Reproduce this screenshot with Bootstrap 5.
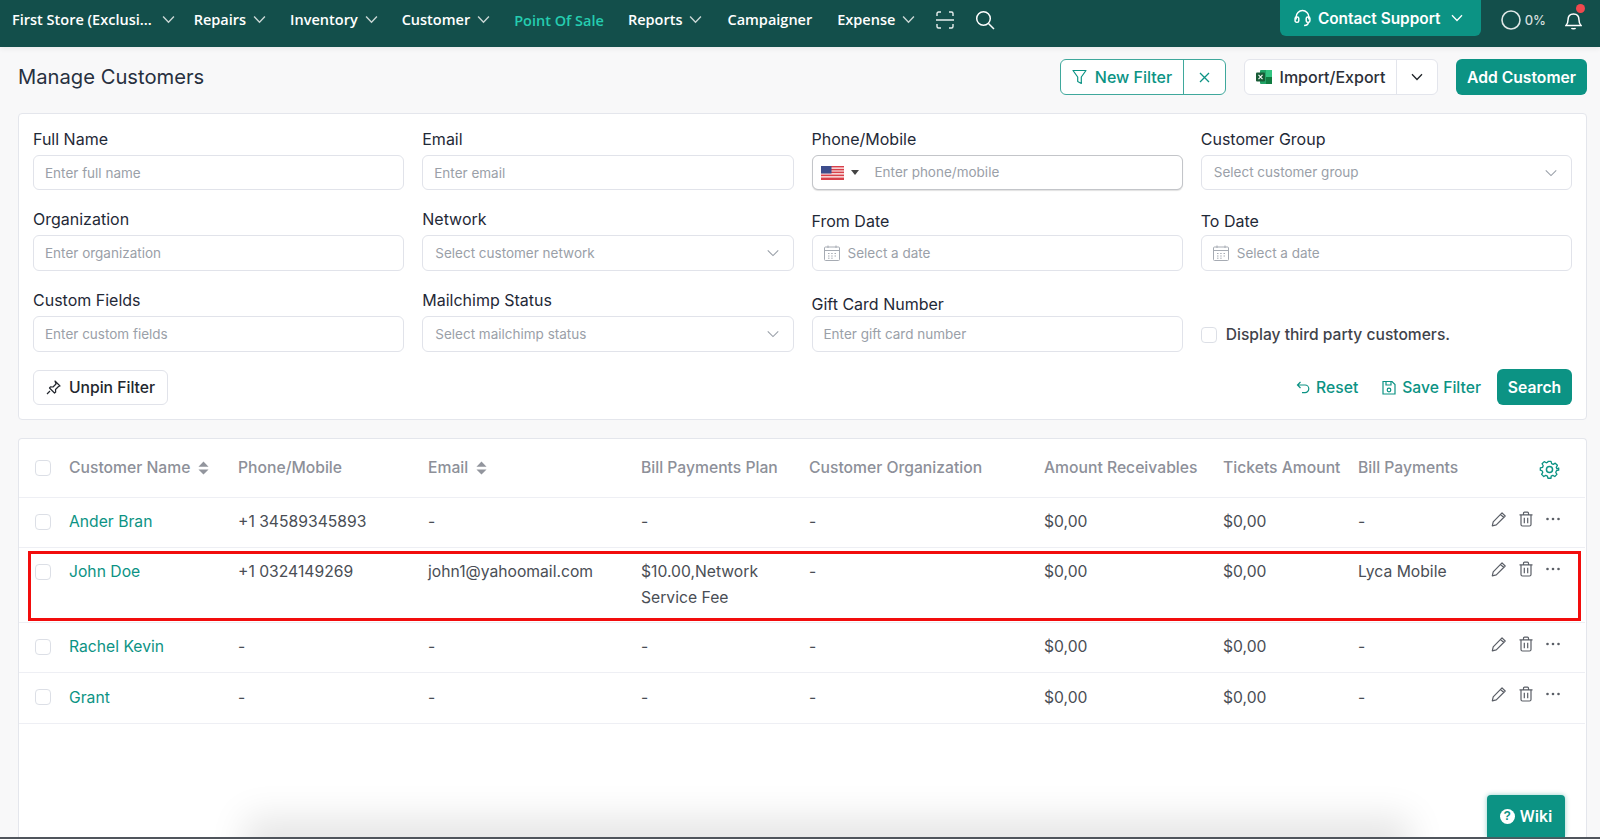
<!DOCTYPE html>
<html lang="en">
<head>
    <meta charset="UTF-8">
    <meta name="viewport" content="width=device-width, initial-scale=1.0">
    <title>Manage Customers</title>
    <link href="https://cdn.jsdelivr.net/npm/bootstrap@5.3.0/dist/css/bootstrap.min.css" rel="stylesheet">
    <style>
        html, body { height: 100%; }
        body {
            font-family: Inter, "Liberation Sans", sans-serif;
            background: #f8f8f9;
            color: #3f434a;
            overflow: hidden;
        }
        svg { flex: none; }
        .page-wrap { height: 839px; display: flex; flex-direction: column; position: relative; }
        .topbar {
            height: 47px;
            background: #134f4b;
            color: #fff;
            padding-left: 12px;
            padding-right: 18px;
            padding-bottom: 8px;
            font: 600 14.5px "Open Sans", sans-serif;
            box-shadow: 0 2px 5px rgba(0,0,0,.06);
        }
        .top-item { display: flex; align-items: center; gap: 7px; margin-right: 24px; white-space: nowrap; color: #fff; }
        .top-item.active-item { color: #25cdb0; padding-top: 2px; }
        .top-item svg { color: #c9d6d4; }
        .store-item { margin-right: 19px; gap: 10px; }
        .wide-item { margin-right: 25px; }
        .expense-item { margin-right: 21px; }
        .scan-icon { margin-right: 21px; }
        .support-btn {
            background: #0c9384;
            color: #fff;
            height: 36px;
            width: 201px;
            align-self: flex-start;
            border-radius: 0 0 6px 6px;
            font: 600 15.4px Inter, sans-serif;
            gap: 7px;
            padding-right: 3px;
            margin-right: 20px;
        }
        .progress-txt { font-size: 13px; font-family: Inter, sans-serif; font-weight: 500; color: #d5dfde; }
        .bell-wrap { position: relative; margin-left: 19px; margin-top: 2px; }
        .bell-dot { position: absolute; width: 9px; height: 9px; background: #f0484e; border-radius: 50%; top: -7px; right: -3px; }
        .head-row { padding: 12px 13px 18px 18px; }
        .page-title { font-size: 20.2px; font-weight: 400; color: #27303f; margin: 0; }
        .filter-group { border: 1px solid #3fa89c; border-radius: 6px; background: #fff; color: #0c9384; width: 166px; height: 36px; margin-right: 18px; }
        .filter-main { width: 123px; gap: 8px; border-right: 1px solid #3fa89c; height: 100%; font-size: 16px; font-weight: 500; }
        .filter-x { flex: 1; height: 100%; }
        .import-group { border: 1px solid #e3e5ec; border-radius: 6px; background: #fff; color: #2c3038; width: 194px; height: 36px; margin-right: 18px; }
        .import-main { width: 152px; gap: 8px; border-right: 1px solid #e3e5ec; height: 100%; font-size: 16px; font-weight: 500; }
        .import-arrow { flex: 1; height: 100%; }
        .teal-btn { background: #0c9384; border: 0; color: #fff; font-weight: 600; height: 36px; border-radius: 6px; font-size: 15.7px; padding: 1px 0 0; }
        .teal-btn:hover { background: #0c9384; color: #fff; }
        .add-btn { width: 131px; }
        .search-btn { width: 75px; }
        .panel { border: 1px solid #e4e6ec; border-radius: 4px; background: #fff; margin-left: 18px; margin-right: 13px; }
        .filter-panel { padding: 13px 14px 14px; height: 307px; margin-bottom: 18px; }
        .filter-row { --bs-gutter-x: 18px; margin-bottom: 17px; align-items: flex-end; }
        .filter-label { display: block; font-size: 16px; font-weight: 400; line-height: 24px; margin-bottom: 4px; color: #1f2937; }
        .label-date { line-height: 20px; margin-bottom: 4px; }
        .label-gift { line-height: 20px; margin-bottom: 2px; }
        .filter-input {
            height: 36px;
            border: 1px solid #e1e3ea;
            border-radius: 6px;
            font-size: 13.5px;
            padding: 0 11px;
            color: #9aa0a8;
            box-shadow: none;
        }
        .filter-input::placeholder, .bare-input::placeholder { color: #9aa0a8; }
        .row-one .filter-input { height: 35px; }
        .form-select.filter-input {
            padding-left: 12px;
            background-image: url("data:image/svg+xml,%3csvg xmlns='http://www.w3.org/2000/svg' viewBox='0 0 16 16'%3e%3cpath fill='none' stroke='%23999fa8' stroke-width='1.2' d='M2 5l6 6 6-6'/%3e%3c/svg%3e");
            background-size: 14px 14px;
            background-position: right 13px center;
        }
        .bare-input { border: 0; outline: 0; font-size: 13.5px; padding: 0; width: 100%; color: #9aa0a8; background: transparent; }
        .phone-box { border-color: #c3c5c9; box-shadow: 0 1px 1px rgba(0,0,0,.12); gap: 0; padding-left: 8px; }
        .caret-mini { width: 0; height: 0; border-left: 4px solid transparent; border-right: 4px solid transparent; border-top: 5px solid #444; margin: 0 12px 0 7px; }
        .box-check { width: 16px; height: 16px; margin: 0; border: 1px solid #dcdfe6; border-radius: 3px; flex: none; }
        .third-party { height: 36px; gap: 9px; font-size: 15.6px; font-weight: 500; color: #3f434a; padding-top: 1px; }
        .unpin-btn { width: 135px; height: 35px; background: #fff; border: 1px solid #e1e3ea; border-radius: 6px; font-size: 15.7px; font-weight: 500; color: #23272e; gap: 8px; padding: 1px 0 0; }
        .link-btn { color: #0c9384; font-size: 15.7px; font-weight: 500; gap: 6px; display: flex; align-items: center; padding-top: 1px; }
        .table-panel { flex: 1; min-height: 0; margin-bottom: 0; border-bottom: 0; border-radius: 4px 4px 0 0; position: relative; overflow: hidden; }
        .cust-table { table-layout: fixed; width: 1566px; margin: 0; font-size: 15.7px; --bs-table-color: #4a4e55; }
        .cust-table th, .cust-table td { padding: 0 10px 0 0; border-bottom: 1px solid #eeeff4; }
        .cust-table th { height: 58px; font-weight: 500; color: #8d9099; vertical-align: middle; white-space: nowrap; padding-top: 1px; }
        .cust-table td { vertical-align: top; line-height: 26px; padding-top: 11px; }
        .cust-table .row-a td { height: 50px; }
        .cust-table .row-b td { height: 75px; }
        .cust-table .row-c td { height: 51px; padding-top: 12px; }
        .cust-table td.check-cell, .cust-table th.check-cell { padding-left: 16px; padding-right: 0; }
        .cust-table td.check-cell { padding-top: 16px; line-height: 1; }
        .cust-table th.check-cell .box-check, .cust-table td.check-cell .box-check { display: block; }
        .cust-name { color: #0c9384; text-decoration: none; }
        .act-cell { box-shadow: -5px 0 6px -4px rgba(0,0,0,.10); padding-left: 29px !important; padding-right: 0 !important; padding-top: 13px !important; }
        .act-icons { display: flex; align-items: center; gap: 11px; color: #5a5e66; }
        .sort-arrows { display: inline-block; vertical-align: -2px; margin-left: 8px; }
        .gear-icon { display: block; margin-left: 29px; margin-top: 3px; }
        .red-box { position: absolute; left: 9px; top: 112px; width: 1553px; height: 70px; border: 3px solid #f20d0d; pointer-events: none; }
        .bottom-haze { position: absolute; left: 250px; right: 200px; bottom: -14px; height: 10px; box-shadow: 0 0 36px 24px rgba(0,0,0,.10); }
        .wiki-btn {
            position: absolute;
            left: 1487px;
            bottom: 2px;
            width: 78px;
            height: 42px;
            background: #0c9384;
            color: #fff;
            border-radius: 4px 4px 0 0;
            font: 500 17px Roboto, sans-serif;
            gap: 5px;
            box-shadow: 0 0 5px rgba(12,147,132,.45);
        }
        .wiki-q { width: 15px; height: 15px; border-radius: 50%; background: #fff; color: #0c9384; font: 700 12px/15px "Liberation Sans", sans-serif; text-align: center; }
        .bottom-line { height: 2px; background: #50555c; flex: none; }
    </style>
</head>
<body>
    <svg width="0" height="0" class="position-absolute">
        <symbol id="chev" viewBox="0 0 12 8"><path d="M1 1.2l5 5.3 5-5.3" fill="none" stroke="currentColor" stroke-width="1.3"/></symbol>
        <symbol id="cal" viewBox="0 0 16 16"><g fill="none" stroke="#a6abb3"><rect x=".5" y="2" width="15" height="13.5" rx="1"/><path d="M.5 5.5h15M4 .5V3M12 .5V3"/><path d="M4 8.5h1.5M7.2 8.5h1.5M10.5 8.5H12M4 11h1.5M7.2 11h1.5M10.5 11H12M4 13.2h1.5M7.2 13.2h1.5"/></g></symbol>
        <symbol id="pencil" viewBox="0 0 16 16"><path d="M11 1.8l3.2 3.2-8.9 8.9-4 .9.9-4zM9.5 3.3l3.2 3.2" fill="none" stroke="currentColor" stroke-width="1.2" stroke-linejoin="round"/></symbol>
        <symbol id="trash" viewBox="0 0 16 16"><path d="M1.5 3.8h13M5.5 3.8V2.2c0-.7.4-1.1 1-1.1h3c.6 0 1 .4 1 1.1v1.6M3 3.8v9.7c0 1 .6 1.5 1.5 1.5h7c.9 0 1.5-.5 1.5-1.5V3.8M6.3 6.8v5.4M9.7 6.8v5.4" fill="none" stroke="currentColor" stroke-width="1.2"/></symbol>
        <symbol id="dots" viewBox="0 0 16 16"><circle cx="2.5" cy="8" r="1.3" fill="currentColor"/><circle cx="8" cy="8" r="1.3" fill="currentColor"/><circle cx="13.5" cy="8" r="1.3" fill="currentColor"/></symbol>
        <symbol id="sort" viewBox="0 0 12 14"><path d="M6 0l5.500 5.500H.5zM6 14L.5 8.500h11z" fill="#92959d"/></symbol>
    </svg>

    <div class="page-wrap">
        <nav class="topbar d-flex align-items-center">
            <div class="top-item store-item">First Store (Exclusi... <svg width="13" height="9"><use href="#chev"/></svg></div>
            <div class="top-item">Repairs <svg width="13" height="9"><use href="#chev"/></svg></div>
            <div class="top-item">Inventory <svg width="13" height="9"><use href="#chev"/></svg></div>
            <div class="top-item">Customer <svg width="13" height="9"><use href="#chev"/></svg></div>
            <div class="top-item active-item">Point Of Sale</div>
            <div class="top-item wide-item">Reports <svg width="13" height="9"><use href="#chev"/></svg></div>
            <div class="top-item wide-item">Campaigner</div>
            <div class="top-item expense-item">Expense <svg width="13" height="9"><use href="#chev"/></svg></div>
            <svg width="18" height="18" viewBox="0 0 18 18" fill="none" stroke="#e8efee" stroke-width="1.4" class="scan-icon"><path d="M1 5V2.500C1 1.700 1.700 1 2.500 1H5M13 1h2.500c.8 0 1.500.7 1.500 1.500V5M1 13v2.500c0 .8.7 1.500 1.500 1.500H5M13 17h2.500c.8 0 1.500-.7 1.500-1.500V13M0 9h18"/></svg>
            <svg width="20" height="20" viewBox="0 0 20 20" fill="none" stroke="#fff" stroke-width="1.500"><circle cx="8.500" cy="8.500" r="6.800"/><path d="M13.500 13.500L19 19"/></svg>

            <div class="support-btn d-flex align-items-center justify-content-center ms-auto">
                <svg width="17" height="18" viewBox="0 0 16 17" fill="none" stroke="#fff" stroke-width="1.400"><path d="M2 10V7.500a6 6 0 0 1 12 0V10"/><rect x="1" y="7.500" width="3.500" height="5" rx="1.500"/><rect x="11.500" y="7.500" width="3.500" height="5" rx="1.500"/><path d="M13.500 12.500c0 2-1.500 3-4 3"/></svg>
                Contact Support
                <svg width="12" height="8" class="ms-1"><use href="#chev"/></svg>
            </div>
            <svg width="20" height="20" viewBox="0 0 20 20" fill="none" stroke="#dfe7e6" stroke-width="1.600"><circle cx="10" cy="10" r="9"/></svg>
            <span class="progress-txt ms-1">0%</span>
            <div class="bell-wrap">
                <svg width="17" height="19" viewBox="0 0 17 19" fill="none" stroke="#fff" stroke-width="1.500" class="d-block"><path d="M1 14.500c1.500-1.500 2-2.500 2-5.500 0-3.500 2-6 5.500-6s5.500 2.500 5.500 6c0 3 .5 4 2 5.500zM6.500 17c.5 1 3.500 1 4 0"/></svg>
                <span class="bell-dot"></span>
            </div>
        </nav>

        <div class="head-row d-flex align-items-center">
            <h1 class="page-title me-auto">Manage Customers</h1>
            <div class="filter-group d-flex align-items-center">
                <div class="filter-main d-flex align-items-center justify-content-center">
                    <svg width="15" height="16" viewBox="0 0 15 16" fill="none" stroke="#0c9384" stroke-width="1.200" stroke-linejoin="round"><path d="M1 1.500h13L9.300 8v6.500l-3.600-2V8z"/></svg>
                    New Filter
                </div>
                <div class="filter-x d-flex align-items-center justify-content-center">
                    <svg width="11" height="11" viewBox="0 0 11 11" stroke="#0c9384" stroke-width="1.300"><path d="M1 1l9 9M10 1l-9 9"/></svg>
                </div>
            </div>
            <div class="import-group d-flex align-items-center">
                <div class="import-main d-flex align-items-center justify-content-center">
                    <svg width="16" height="16" viewBox="0 0 16 16"><rect x="4" y="1" width="12" height="14" rx="1" fill="#21a366"/><rect x="10" y="1" width="6" height="7" fill="#33c481"/><rect x="10" y="8" width="6" height="7" fill="#107c41"/><rect x="0" y="3.500" width="9" height="9" rx="1" fill="#185c37"/><path d="M2.500 5.800l4 4.400M6.500 5.800l-4 4.400" stroke="#fff" stroke-width="1.100"/></svg>
                    Import/Export
                </div>
                <div class="import-arrow d-flex align-items-center justify-content-center">
                    <svg width="12" height="8" class="text-dark"><use href="#chev"/></svg>
                </div>
            </div>
            <button class="btn teal-btn add-btn">Add Customer</button>
        </div>

        <div class="panel filter-panel">
            <div class="row filter-row row-one">
                <div class="col-3">
                    <label class="filter-label">Full Name</label>
                    <input class="form-control filter-input" placeholder="Enter full name">
                </div>
                <div class="col-3">
                    <label class="filter-label">Email</label>
                    <input class="form-control filter-input" placeholder="Enter email">
                </div>
                <div class="col-3">
                    <label class="filter-label">Phone/Mobile</label>
                    <div class="form-control filter-input phone-box d-flex align-items-center">
                        <svg width="23" height="14" viewBox="0 0 23 14"><rect width="23" height="14" fill="#d8404a"/><path d="M0 2.200h23M0 5h23M0 7.800h23M0 10.800h23" stroke="#fff" stroke-width="1.200"/><rect width="10.500" height="7.500" fill="#3d4d8c"/></svg>
                        <span class="caret-mini"></span>
                        <input class="bare-input ms-1" placeholder="Enter phone/mobile">
                    </div>
                </div>
                <div class="col-3">
                    <label class="filter-label">Customer Group</label>
                    <select class="form-select filter-input"><option>Select customer group</option></select>
                </div>
            </div>
            <div class="row filter-row">
                <div class="col-3">
                    <label class="filter-label">Organization</label>
                    <input class="form-control filter-input" placeholder="Enter organization">
                </div>
                <div class="col-3">
                    <label class="filter-label">Network</label>
                    <select class="form-select filter-input"><option>Select customer network</option></select>
                </div>
                <div class="col-3">
                    <label class="filter-label label-date">From Date</label>
                    <div class="form-control filter-input d-flex align-items-center gap-2">
                        <svg width="16" height="16"><use href="#cal"/></svg>
                        <input class="bare-input" placeholder="Select a date">
                    </div>
                </div>
                <div class="col-3">
                    <label class="filter-label label-date">To Date</label>
                    <div class="form-control filter-input d-flex align-items-center gap-2">
                        <svg width="16" height="16"><use href="#cal"/></svg>
                        <input class="bare-input" placeholder="Select a date">
                    </div>
                </div>
            </div>
            <div class="row filter-row">
                <div class="col-3">
                    <label class="filter-label">Custom Fields</label>
                    <input class="form-control filter-input" placeholder="Enter custom fields">
                </div>
                <div class="col-3">
                    <label class="filter-label">Mailchimp Status</label>
                    <select class="form-select filter-input"><option>Select mailchimp status</option></select>
                </div>
                <div class="col-3">
                    <label class="filter-label label-gift">Gift Card Number</label>
                    <input class="form-control filter-input" placeholder="Enter gift card number">
                </div>
                <div class="col-3">
                    <div class="third-party d-flex align-items-center">
                        <input type="checkbox" class="form-check-input box-check">
                        Display third party customers.
                    </div>
                </div>
            </div>
            <div class="d-flex align-items-center">
                <button class="btn unpin-btn d-flex align-items-center justify-content-center me-auto">
                    <svg width="15" height="15" viewBox="0 0 15 15" fill="none" stroke="#23272e" stroke-width="1.200" stroke-linejoin="round"><path d="M9 1l5 5-1.500.5-3 3 .2 2.500-1.200 1-5-5 1-1.200 2.500.2 3-3zM4 11l-3 3"/></svg>
                    Unpin Filter
                </button>
                <div class="link-btn me-4">
                    <svg width="14" height="13" viewBox="0 0 14 13" fill="none" stroke="#0c9384" stroke-width="1.200"><path d="M4.500 1L1.500 4l3 3M1.500 4H9a3.800 3.800 0 0 1 0 7.600H6"/></svg>
                    Reset
                </div>
                <div class="link-btn me-3">
                    <svg width="14" height="15" viewBox="0 0 14 15" fill="none" stroke="#0c9384" stroke-width="1.200"><path d="M1 1.500h9l3 3v9.500H1z"/><path d="M4 1.500V5h5V1.500"/><circle cx="7" cy="10" r="1.800"/></svg>
                    Save Filter
                </div>
                <button class="btn teal-btn search-btn">Search</button>
            </div>
        </div>

        <div class="panel table-panel">
            <table class="table cust-table">
                <colgroup>
                    <col style="width:50px"><col style="width:169px"><col style="width:190px"><col style="width:213px"><col style="width:168px">
                    <col style="width:235px"><col style="width:179px"><col style="width:135px"><col style="width:104px"><col style="width:123px">
                </colgroup>
                <thead>
                    <tr>
                        <th class="check-cell"><input type="checkbox" class="form-check-input box-check"></th>
                        <th>Customer Name<svg class="sort-arrows" width="11" height="14"><use href="#sort"/></svg></th>
                        <th>Phone/Mobile</th>
                        <th>Email<svg class="sort-arrows" width="11" height="14"><use href="#sort"/></svg></th>
                        <th>Bill Payments Plan</th>
                        <th>Customer Organization</th>
                        <th>Amount Receivables</th>
                        <th>Tickets Amount</th>
                        <th>Bill Payments</th>
                        <th class="ps-5">
                            <svg width="21" height="21" viewBox="0 0 24 24" fill="none" stroke="#0c9384" stroke-width="1.700" stroke-linejoin="round" class="gear-icon"><circle cx="12" cy="12" r="3.500"/><path d="M10 2h4l.8 2.900 2.100.9 2.600-1.500 2.800 2.800-1.500 2.600.9 2.100L24 10.600v2.800l-2.900.8-.9 2.100 1.500 2.600-2.800 2.800-2.600-1.500-2.100.9L14 24h-4l-.8-2.900-2.100-.9-2.600 1.500-2.800-2.800 1.500-2.600-.9-2.100L0 13.400v-2.800l2.900-.8.9-2.100-1.500-2.600 2.800-2.800 2.600 1.500 2.100-.9z" transform="translate(1.500 1) scale(.875)"/></svg>
                        </th>
                    </tr>
                </thead>
                <tbody>
                    <tr class="row-a">
                        <td class="check-cell"><input type="checkbox" class="form-check-input box-check"></td>
                        <td><a class="cust-name" href="#">Ander Bran</a></td>
                        <td>+1 34589345893</td><td>-</td><td>-</td><td>-</td><td>$0,00</td><td>$0,00</td><td>-</td>
                        <td class="act-cell"><div class="act-icons"><svg width="16" height="16"><use href="#pencil"/></svg><svg width="16" height="16"><use href="#trash"/></svg><svg width="16" height="16"><use href="#dots"/></svg></div></td>
                    </tr>
                    <tr class="row-b">
                        <td class="check-cell"><input type="checkbox" class="form-check-input box-check"></td>
                        <td><a class="cust-name" href="#">John Doe</a></td>
                        <td>+1 0324149269</td><td>john1@yahoomail.com</td><td>$10.00,Network Service Fee</td><td>-</td><td>$0,00</td><td>$0,00</td><td>Lyca Mobile</td>
                        <td class="act-cell"><div class="act-icons"><svg width="16" height="16"><use href="#pencil"/></svg><svg width="16" height="16"><use href="#trash"/></svg><svg width="16" height="16"><use href="#dots"/></svg></div></td>
                    </tr>
                    <tr class="row-a">
                        <td class="check-cell"><input type="checkbox" class="form-check-input box-check"></td>
                        <td><a class="cust-name" href="#">Rachel Kevin</a></td>
                        <td>-</td><td>-</td><td>-</td><td>-</td><td>$0,00</td><td>$0,00</td><td>-</td>
                        <td class="act-cell"><div class="act-icons"><svg width="16" height="16"><use href="#pencil"/></svg><svg width="16" height="16"><use href="#trash"/></svg><svg width="16" height="16"><use href="#dots"/></svg></div></td>
                    </tr>
                    <tr class="row-c">
                        <td class="check-cell"><input type="checkbox" class="form-check-input box-check"></td>
                        <td><a class="cust-name" href="#">Grant</a></td>
                        <td>-</td><td>-</td><td>-</td><td>-</td><td>$0,00</td><td>$0,00</td><td>-</td>
                        <td class="act-cell"><div class="act-icons"><svg width="16" height="16"><use href="#pencil"/></svg><svg width="16" height="16"><use href="#trash"/></svg><svg width="16" height="16"><use href="#dots"/></svg></div></td>
                    </tr>
                </tbody>
            </table>
            <div class="red-box"></div>
            <div class="bottom-haze"></div>
        </div>
        <div class="bottom-line"></div>
        <div class="wiki-btn d-flex align-items-center justify-content-center"><span class="wiki-q">?</span>Wiki</div>
    </div>
    <script src="https://cdn.jsdelivr.net/npm/bootstrap@5.3.0/dist/js/bootstrap.bundle.min.js"></script>
</body>
</html>
